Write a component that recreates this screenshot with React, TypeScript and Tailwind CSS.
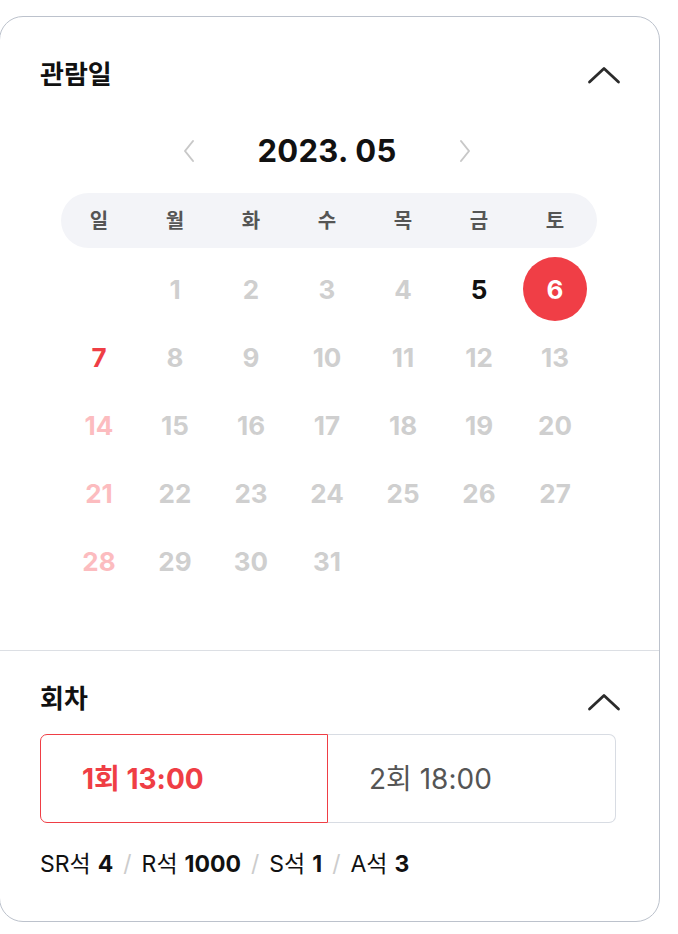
import React from "react";

const FONT = { fontFamily: '"Inter", "Noto Sans CJK KR", sans-serif' };

const WEEK = ["일", "월", "화", "수", "목", "금", "토"];

type Day = { n: number; tone: "off" | "on" | "sun" | "sunOff" | "sel" } | null;

function buildDays(): Day[] {
  const days: Day[] = [null];
  for (let n = 1; n <= 31; n++) {
    let tone: "off" | "on" | "sun" | "sunOff" | "sel" = "off";
    if (n === 5) tone = "on";
    else if (n === 6) tone = "sel";
    else if (n === 7) tone = "sun";
    else if (n === 14 || n === 21 || n === 28) tone = "sunOff";
    days.push({ n, tone });
  }
  return days;
}

function ChevronUp() {
  return (
    <svg width="34" height="20" viewBox="0 0 34 20" fill="none">
      <polyline
        points="2.5,17 17,3.5 31.5,17"
        stroke="#2b2b2b"
        strokeWidth="2.8"
        strokeLinecap="round"
        strokeLinejoin="round"
      />
    </svg>
  );
}

function NavArrow({ dir }: { dir: "l" | "r" }) {
  return (
    <svg width="14" height="24" viewBox="0 0 14 24" fill="none">
      <polyline
        points={dir === "l" ? "11,2 3,12 11,22" : "3,2 11,12 3,22"}
        stroke="#c8c8c8"
        strokeWidth="2"
        strokeLinecap="round"
        strokeLinejoin="round"
      />
    </svg>
  );
}

function DayCell({ day }: { day: Day }) {
  if (!day) return <div className="h-[68px]" />;
  const toneClass =
    day.tone === "on"
      ? "text-[#111111]"
      : day.tone === "sun"
      ? "text-[#ef3e45]"
      : day.tone === "sunOff"
      ? "text-[#fcbcbf]"
      : day.tone === "sel"
      ? "text-white"
      : "text-[#cfcfcf]";
  return (
    <div className="flex h-[68px] items-center justify-center">
      {day.tone === "sel" ? (
        <div className="flex h-[64px] w-[64px] items-center justify-center rounded-full bg-[#f03e46]">
          <span className="text-[26px] font-bold text-white">{day.n}</span>
        </div>
      ) : (
        <span className={`text-[26px] font-bold ${toneClass}`}>{day.n}</span>
      )}
    </div>
  );
}

export default function App() {
  const days = buildDays();

  return (
    <div className="min-h-screen bg-white" style={FONT}>
      <div className="pt-4">
        <div className="-ml-px h-[906px] w-[661px] rounded-[24px] border border-[#bcc2cc] bg-white">
          {/* 관람일 */}
          <section className="px-[40px] pb-[55px] pt-[40px]">
            <div className="flex h-[34px] items-center justify-between">
              <h2 className="text-[26px] font-bold text-[#111111]">관람일</h2>
              <div className="-mr-[2px] mt-[2px]">
                <ChevronUp />
              </div>
            </div>

            <div className="ml-[21px] mt-[40px] w-[532px]">
              <div className="flex h-[40px] items-center justify-center">
                <button className="flex h-[40px] w-[40px] items-center justify-center">
                  <NavArrow dir="l" />
                </button>
                <div className="mx-[48px] text-[31px] font-bold tracking-[0.3px] text-[#111111]">
                  2023. 05
                </div>
                <button className="flex h-[40px] w-[40px] items-center justify-center">
                  <NavArrow dir="r" />
                </button>
              </div>

              <div className="mt-[22px] grid h-[55px] w-[536px] grid-cols-[repeat(7,76px)] items-center rounded-full bg-[#f3f4f8]">
                {WEEK.map((w) => (
                  <div key={w} className="text-center text-[20px] font-bold text-[#555555]">
                    {w}
                  </div>
                ))}
              </div>

              <div className="mt-[7px] grid grid-cols-[repeat(7,76px)]">
                {days.map((d, i) => (
                  <DayCell key={i} day={d} />
                ))}
              </div>
            </div>
          </section>

          <div className="h-px w-full bg-[#dcdfe4]" />

          {/* 회차 */}
          <section className="px-[40px] pt-[30px]">
            <div className="flex h-[34px] items-center justify-between">
              <h2 className="text-[26px] font-bold text-[#111111]">회차</h2>
              <div className="-mr-[2px] mt-[8px]">
                <ChevronUp />
              </div>
            </div>

            <div className="mt-[19px] flex h-[89px] w-[576px]">
              <button className="flex h-full w-[288px] items-center rounded-l-[7px] border-[1.5px] border-[#ef3e45] px-[41px] text-[28px] font-bold text-[#ef3e45]">
                1회 13:00
              </button>
              <button className="flex h-full flex-1 items-center rounded-r-[7px] border-[1.5px] border-l-0 border-[#d8dce3] px-[41px] text-[28px] text-[#555555]">
                2회 18:00
              </button>
            </div>

            <p className="mt-[24px] flex items-center text-[23px] text-[#111111]">
              <span>SR석</span>
              <b className="ml-[7px] font-bold">4</b>
              <span className="mx-[10px] text-[#cccccc]">/</span>
              <span>R석</span>
              <b className="ml-[7px] font-bold">1000</b>
              <span className="mx-[10px] text-[#cccccc]">/</span>
              <span>S석</span>
              <b className="ml-[7px] font-bold">1</b>
              <span className="mx-[10px] text-[#cccccc]">/</span>
              <span>A석</span>
              <b className="ml-[7px] font-bold">3</b>
            </p>
          </section>
        </div>
      </div>
    </div>
  );
}
